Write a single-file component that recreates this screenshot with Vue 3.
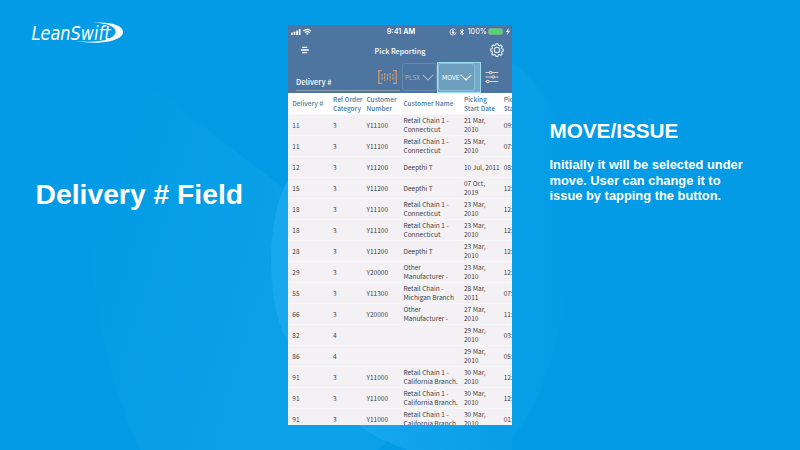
<script setup>
const columns = [
  ['Delivery #'],
  ['Ref Order', 'Category'],
  ['Customer', 'Number'],
  ['Customer Name'],
  ['Picking', 'Start Date'],
  ['Pic', 'Sta'],
]
const connecticut = ['Retail Chain 1 -', 'Connecticut']
const california = ['Retail Chain 1 -', 'California Branch.']
const other = ['Other', 'Manufacturer -']
const rows = [
  [['11'], ['3'], ['Y11100'], connecticut, ['21 Mar,', '2010'], ['09:']],
  [['11'], ['3'], ['Y11100'], connecticut, ['25 Mar,', '2010'], ['07:']],
  [['12'], ['3'], ['Y11200'], ['Deepthi T'], ['10 Jul, 2011'], ['08:']],
  [['15'], ['3'], ['Y11200'], ['Deepthi T'], ['07 Oct,', '2019'], ['12:']],
  [['18'], ['3'], ['Y11100'], connecticut, ['23 Mar,', '2010'], ['12:']],
  [['18'], ['3'], ['Y11100'], connecticut, ['23 Mar,', '2010'], ['12:']],
  [['28'], ['3'], ['Y11200'], ['Deepthi T'], ['23 Mar,', '2010'], ['12:']],
  [['29'], ['3'], ['Y20000'], other, ['23 Mar,', '2010'], ['12:']],
  [['55'], ['3'], ['Y11300'], ['Retail Chain -', 'Michigan Branch'], ['28 Mar,', '2011'], ['07:']],
  [['66'], ['3'], ['Y20000'], other, ['27 Mar,', '2010'], ['11:']],
  [['82'], ['4'], [], [], ['29 Mar,', '2010'], ['03:']],
  [['86'], ['4'], [], [], ['29 Mar,', '2010'], ['05:']],
  [['91'], ['3'], ['Y11000'], california, ['30 Mar,', '2010'], ['12:']],
  [['91'], ['3'], ['Y11000'], california, ['30 Mar,', '2010'], ['12:']],
  [['91'], ['3'], ['Y11000'], california, ['30 Mar,', '2010'], ['01:']],
]
</script>

<template>
  <main class="slide">
    <svg class="backdrop" viewBox="0 0 800 450" aria-hidden="true">
      <defs>
        <linearGradient id="beam" gradientUnits="userSpaceOnUse" x1="90" x2="288" y1="200" y2="260">
          <stop offset="0" stop-color="#0ea4ea" stop-opacity="0" />
          <stop offset="1" stop-color="#0ea4ea" />
        </linearGradient>
        <linearGradient id="glow" gradientUnits="userSpaceOnUse" x1="512" x2="575" y1="0" y2="0">
          <stop offset="0" stop-color="#0ca3ea" />
          <stop offset="1" stop-color="#0ca3ea" stop-opacity="0" />
        </linearGradient>
        <linearGradient id="disc" gradientUnits="userSpaceOnUse" x1="360" x2="520" y1="0" y2="0">
          <stop offset="0" stop-color="#16a7ef" />
          <stop offset="1" stop-color="#069ee7" />
        </linearGradient>
      </defs>
      <path d="M114 57L288 192V425H512V450H140C90 340 70 190 114 57Z" fill="url(#beam)" opacity=".65" />
      <path d="M512 62C565 100 590 180 568 290C555 360 535 420 500 450H512Z" fill="url(#glow)" opacity=".5" />
      <path d="M288 180C266 215 265 305 288 342Z" fill="#17a8f0" />
      <path d="M359 425H512V450H408Q377 440 359 425Z" fill="url(#disc)" />
      <path d="M378 450L388 441Q397 447 408 450Z" fill="#039be5" />
    </svg>

    <section class="left">
      <svg class="logo" viewBox="0 0 96 26" role="img" aria-label="LeanSwift">
        <text x="0.5" y="19" textLength="79" lengthAdjust="spacingAndGlyphs">LeanSwift</text>
        <path d="M63 1.6C80 .4 92.400 4.300 92 11.200C91.400 19.600 70 24.700 44 19.800C66 22.600 83.500 19 84.600 11.300C85.300 6 77 2.500 63 1.600Z" />
      </svg>
      <h1>Delivery # Field</h1>
    </section>

    <section class="phone">
      <header class="topbar">
        <div class="status">
          <svg class="signal" viewBox="0 0 22 8">
            <path d="M0 4.5h1.7V7H0zM2.6 3.7h1.7V7H2.6zM5.2 2.5h1.7V7H5.2zM7.8 1h1.7v6H7.8z" fill="#fff" />
            <g fill="none" stroke="#fff" stroke-width="1.2">
              <path d="M12.4 3Q16.3-.4 20.2 3M13.9 4.7Q16.3 2.5 18.7 4.7" />
            </g>
            <path d="M15 5.7Q16.3 4.7 17.6 5.7L16.3 7.1Z" fill="#fff" />
          </svg>
          <span class="time">9:41 AM</span>
          <div class="power">
            <svg class="lock" viewBox="0 0 8 8" fill="none" stroke="#fff">
              <circle cx="4" cy="4" r="3.1" stroke-width=".7" stroke-dasharray="17 2.5" />
              <path d="M2.7 3.8h2.6v1.8H2.7z" fill="#fff" stroke="none" />
              <path d="M3.3 3.9V2.5h1.4v1.4" stroke-width=".6" />
            </svg>
            <svg class="bluetooth" viewBox="0 0 6 8" fill="none" stroke="#fff" stroke-width=".9">
              <path d="M1 2.2L4.7 5.6L3 7V1L4.7 2.5L1 5.8" />
            </svg>
            <span>100%</span>
            <i class="battery"></i>
            <svg class="bolt" viewBox="0 0 4 7"><path d="M2.5 0L0 4h1.7L1.2 7L4 2.8H2.2z" fill="#fff" /></svg>
          </div>
        </div>
        <div class="titlebar">
          <svg class="menu" viewBox="0 0 10 8" stroke="#fff" stroke-width="1.3">
            <path d="M2.2 1.4h5M.8 4h8M2.2 6.6h5" />
          </svg>
          <span>Pick Reporting</span>
          <svg class="gear" viewBox="0 0 14 14" fill="none" stroke="#e4eef5" stroke-linejoin="round">
            <path d="M6 .9h2l.4 1.3 1.2.5 1.3-.7 1.3 1.4-.7 1.2.5 1.2 1.3.4v1.9l-1.3.4-.5 1.2.7 1.3-1.4 1.3-1.2-.7-1.2.5-.4 1.3H6l-.4-1.3-1.2-.5-1.3.7-1.3-1.4.7-1.2-.5-1.2L.7 8V6.1L2 5.7l.5-1.2-.7-1.3 1.4-1.3 1.2.7 1.2-.5z" stroke-width="1.1" />
            <circle cx="7" cy="7" r="2.7" stroke-width="1.1" />
          </svg>
        </div>
        <div class="filters">
          <div class="field">
            <span>Delivery #</span>
            <svg class="scan" viewBox="0 0 19 14" fill="none" stroke="#c29b7b">
              <path d="M4 .7H.8v12.6h3.2M15 .7h3.2v12.6h-3.2" stroke-width="1.3" />
              <path d="M4 4v6M6.7 3v8M9.5 4v6M12.2 3v8M15 4v6" stroke-width="1.3" stroke-dasharray="2.6 .6" />
            </svg>
          </div>
          <div class="select plain">
            <span>PLSX</span>
            <svg viewBox="0 0 12 7"><path d="M.7.8L6 6L11.3.8" /></svg>
          </div>
          <div class="highlight">
            <div class="select active">
              <span>MOVE</span>
              <svg viewBox="0 0 12 7"><path d="M.7.8L6 6L11.3.8" /></svg>
            </div>
          </div>
          <svg class="sliders" viewBox="0 0 14 14" fill="none" stroke="#e2d3c9" stroke-width="1.1">
            <path d="M.5 2.5h4M7 2.5H13.3M.5 7h6.5M9.5 7h3.8M.5 11.5h1.1M4.1 11.5H13.3" />
            <circle cx="5.7" cy="2.5" r="1.25" /><circle cx="8.2" cy="7" r="1.25" /><circle cx="2.8" cy="11.5" r="1.25" />
          </svg>
        </div>
      </header>

      <div class="table">
        <div class="row head">
          <div v-for="(col, i) in columns" :key="i" class="cell">
            <span v-for="line in col" :key="line">{{ line }}</span>
          </div>
        </div>
        <div v-for="(row, r) in rows" :key="r" class="row">
          <div v-for="(cell, c) in row" :key="c" class="cell">
            <span v-for="line in cell" :key="line">{{ line }}</span>
          </div>
        </div>
      </div>
    </section>

    <section class="right">
      <h2>MOVE/ISSUE</h2>
      <p>Initially it will be selected under<br />move. User can change it to<br />issue by tapping the button.</p>
    </section>
  </main>
</template>

<style>
body {
  overflow: hidden;
}
</style>

<style scoped>
.slide {
  position: relative;
  display: grid;
  grid-template-columns: 288px 224px 288px;
  width: 800px;
  height: 450px;
  overflow: hidden;
  background: #039be5;
  color: #fff;
  font-family: "Liberation Sans", sans-serif;
}
.backdrop {
  position: absolute;
  inset: 0;
  width: 800px;
  height: 450px;
}
.left,
.phone,
.right {
  position: relative;
}
.left {
  padding: 21px 0 0 31px;
}
.logo {
  display: block;
  width: 96px;
  height: 26px;
  overflow: visible;
  fill: #fff;
}
.logo text {
  font: italic 19.5px "DejaVu Sans", sans-serif;
}
h1 {
  margin: 130px 0 0 4.5px;
  font-size: 28.3px;
  line-height: 34px;
  white-space: nowrap;
}
.right {
  padding: 119px 0 0 37.5px;
}
h2 {
  margin: 0;
  font-size: 20.7px;
  line-height: 24px;
}
p {
  margin: 14px 0 0;
  font-size: 12.88px;
  font-weight: 700;
  line-height: 15.5px;
  white-space: nowrap;
}
.phone {
  display: flex;
  flex-direction: column;
  height: 400px;
  margin-top: 25px;
  overflow: hidden;
  background: #f3f1f4;
  font-family: "Noto Sans CJK JP", sans-serif;
}
.topbar {
  flex: none;
  height: 68px;
  background: #4d759f;
}
.status {
  display: grid;
  grid-template-columns: 1fr auto 1fr;
  align-items: center;
  height: 13px;
  padding: 0 3px;
  font-family: Inter, sans-serif;
  font-size: 7.3px;
  line-height: 13px;
}
.signal {
  width: 22px;
  height: 8px;
}
.time {
  padding-left: 2px;
  font-weight: 600;
}
.power {
  display: flex;
  align-items: center;
  justify-content: flex-end;
}
.lock {
  width: 8px;
  height: 8px;
  margin-right: 2px;
}
.bluetooth {
  width: 6px;
  height: 8px;
  margin-right: 3px;
}
.battery {
  box-sizing: border-box;
  width: 15px;
  height: 7px;
  margin: 0 3px 0 1px;
  border: 1px solid #79a399;
  border-radius: 2px;
  background: #4cd964;
}
.bolt {
  width: 4px;
  height: 7px;
  margin-right: -1px;
}
.titlebar {
  display: grid;
  grid-template-columns: 1fr auto 1fr;
  align-items: center;
  height: 24px;
  padding: 0 8px 0 12px;
  font-size: 7.25px;
  font-weight: 500;
}
.menu {
  width: 10px;
  height: 8px;
}
.titlebar span {
  padding: 1px 4px 0 0;
  line-height: 10px;
}
.gear {
  width: 14px;
  height: 14px;
  justify-self: end;
}
.filters {
  display: flex;
  height: 31px;
  padding-left: 8px;
}
.field {
  display: flex;
  box-sizing: border-box;
  width: 104px;
  height: 29px;
  padding-right: 3px;
  border-bottom: 1px solid #8b9ea9;
  font-size: 7.5px;
  font-weight: 500;
  justify-content: space-between;
}
.field span {
  padding-top: 14px;
  line-height: 11px;
}
.scan {
  width: 19px;
  height: 14px;
  margin-top: 8px;
}
.select {
  display: flex;
  box-sizing: border-box;
  align-items: center;
  justify-content: space-between;
  height: 28px;
  border: 1px solid #6688aa;
  border-radius: 3px;
  font-size: 6.5px;
}
.select svg {
  width: 12px;
  height: 7px;
  fill: none;
  stroke: currentColor;
  stroke-width: 1.1;
}
.plain {
  width: 35px;
  margin: 1px 0 0 2px;
  padding: 0 2px;
  color: #a3b6c9;
}
.highlight {
  box-sizing: border-box;
  width: 44px;
  height: 31px;
  border: 1px solid #9bdef2;
  background: #74a9c8;
}
.active {
  width: 37px;
  height: 28px;
  padding: 0 2px 0 3px;
  border-color: #8bc1d8;
  background: #6f9fbe;
}
.sliders {
  width: 14px;
  height: 14px;
  margin: 8px 0 0 4px;
}
.row {
  display: grid;
  grid-template-columns: 40.7px 33.5px 37px 60.5px 39.7px 40px;
  box-sizing: border-box;
  height: 21px;
  padding-left: 4.3px;
  border-bottom: 1px solid #f7f6f8;
  color: #3f3f43;
  font-size: 6.52px;
  line-height: 9px;
  white-space: nowrap;
}
.head {
  height: 22px;
  background: #fff;
  color: #4a7a9e;
  font-weight: 500;
}
.cell {
  display: flex;
  flex-direction: column;
  justify-content: center;
}
</style>
